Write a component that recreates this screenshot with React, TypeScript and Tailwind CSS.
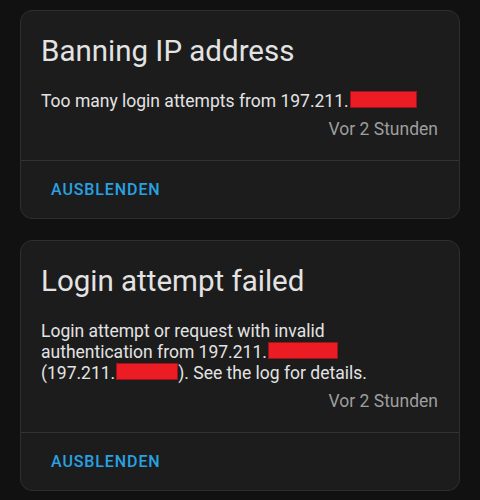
import React from "react";

function Redacted({ w }: { w: number }) {
  return (
    <span
      className="inline-block h-[17px] bg-[#ec1c24] border border-[#9c1419] align-[-1px] ml-[1px]"
      style={{ width: w }}
    />
  );
}

function Card({
  title,
  children,
}: {
  title: string;
  children: React.ReactNode;
}) {
  return (
    <div className="w-[440px] rounded-[12px] border border-[#2e2e2e] bg-[#1c1c1c] flex flex-col">
      <div className="px-[20px] pt-[20px] pb-[20px] flex flex-col">
        <div className="text-[29.5px] leading-[40px] text-[#e3e3e3] mb-[20px]">
          {title}
        </div>
        <div className="text-[17.5px] leading-[21px] text-[#e3e3e3]">{children}</div>
        <div className="mt-[7px] text-[17.5px] leading-[21px] text-[#9e9e9e] text-right pr-[1px]">
          Vor 2 Stunden
        </div>
      </div>
      <div className="border-t border-[#333333] pl-[30px] pt-[19px] pb-[18px] text-[16px] leading-[20px] font-medium tracking-[0.9px] text-[#28a2e2]">
        AUSBLENDEN
      </div>
    </div>
  );
}

export default function App() {
  return (
    <div
      className="w-[480px] h-[500px] bg-[#111111] pt-[10px] pl-[20px] flex flex-col gap-[21px]"
      style={{ fontFamily: "Roboto, 'Noto Sans', sans-serif" }}
    >
      <Card title="Banning IP address">
        Too many login attempts from 197.211.
        <Redacted w={67} />
      </Card>
      <Card title="Login attempt failed">
        Login attempt or request with invalid
        <br />
        authentication from 197.211.
        <Redacted w={70} />
        <br />
        (197.211.
        <Redacted w={62} />
        ). See the log for details.
      </Card>
    </div>
  );
}
